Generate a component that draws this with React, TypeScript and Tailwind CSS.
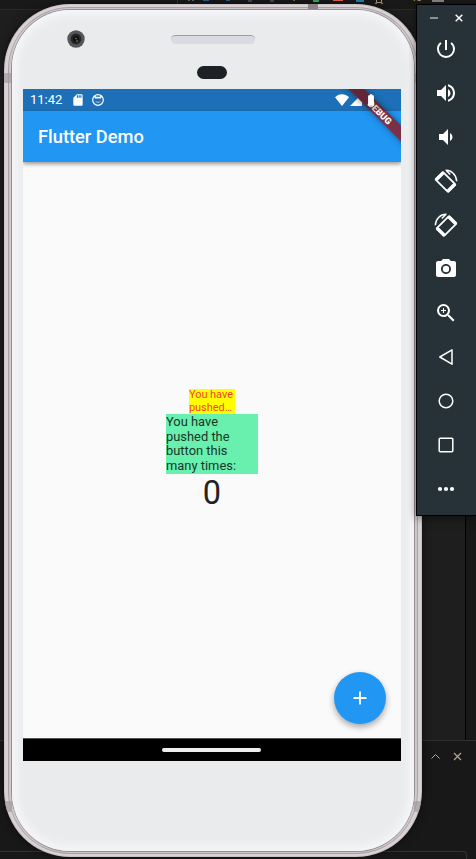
import React from "react";
import { MdPowerSettingsNew, MdVolumeUp, MdVolumeDown, MdPhotoCamera, MdZoomIn, MdSdCard, MdBatteryFull } from "react-icons/md";

function RotateIcon({ flipped = false }: { flipped?: boolean }) {
  return (
    <svg viewBox="0 0 24 24" className={flipped ? "size-6 -scale-x-100" : "size-6"} fill="none" stroke="white">
      <g transform="rotate(-45 11.5 13)">
        <rect x="6.2" y="4" width="10.6" height="18" rx="1" strokeWidth="1.8" />
        <path d="M6.2 5h10.6M6.2 21h10.6" strokeWidth="3" />
      </g>
      <path d="M11.5 1.3C17.6 1 22.2 5.8 22.7 12.2M12.2 1.5l4 4" strokeWidth="1.5" />
    </svg>
  );
}

function Outline({ children }: { children: React.ReactNode }) {
  return (
    <svg viewBox="0 0 24 24" className="size-6" fill="none" stroke="white" strokeWidth="1.5" strokeLinejoin="round">
      {children}
    </svg>
  );
}

const tools: React.ReactNode[] = [
  <MdPowerSettingsNew size={24} />,
  <MdVolumeUp size={24} />,
  <MdVolumeDown size={24} />,
  <RotateIcon />,
  <RotateIcon flipped />,
  <MdPhotoCamera size={24} />,
  <MdZoomIn size={24} />,
  <Outline><path d="M18 4.8v14.4L5.8 12Z" /></Outline>,
  <Outline><circle cx="12" cy="12" r="6.8" /></Outline>,
  <Outline><rect x="5.2" y="5.2" width="13.6" height="13.6" rx="1" /></Outline>,
  <svg viewBox="0 0 24 24" className="size-6" fill="white"><circle cx="6" cy="12" r="2.1" /><circle cx="12" cy="12" r="2.1" /><circle cx="18" cy="12" r="2.1" /></svg>,
];

function Toolbar() {
  return (
    <aside className="absolute left-[416px] top-1 flex h-[512px] w-[61px] flex-col border border-black bg-[#273238] text-white shadow-[0_2px_8px_rgba(0,0,0,0.5)]">
      <div className="flex h-[22px] items-end gap-[17px] pl-[13px]">
        <svg viewBox="0 0 8 8" className="mb-[5px] size-2" stroke="#a5adb0" strokeWidth="1.6"><path d="M0 4h8" /></svg>
        <svg viewBox="0 0 8 8" className="mb-[5px] size-2" stroke="white" strokeWidth="1.5"><path d="m.7.7 6.6 6.6M7.3.7.7 7.3" /></svg>
      </div>
      {tools.map((icon, i) => (
        <div key={i} className="flex h-11 shrink-0 items-center justify-center pr-[2px]">{icon}</div>
      ))}
    </aside>
  );
}

const tabMarks = [
  "h-px w-1.5 bg-[#35628a]",
  "h-px w-1 bg-[#35628a]",
  "h-0.5 w-1 bg-[#35506a]",
  "h-0.5 w-1 bg-[#35506a]",
  "h-px w-0.5 bg-[#80662e]",
  "h-0.5 w-1.5 bg-[#35b558]",
  "h-px w-2.5 bg-[#ef624f]",
  "h-0.5 w-2 bg-[#2384b8]",
];

function Editor() {
  return (
    <div className="flex h-full flex-col bg-[#181818]">
      <div className="flex h-[10px] items-start border-b border-[#292929] bg-[#191919] pl-[177px]">
        <span className="flex h-[5px] w-[18px] gap-0.5 border-l border-[#333] pl-2.5">
          <i className="h-px w-0.5 bg-[#5d6972]" />
          <i className="h-px w-0.5 bg-[#5d6972]" />
        </span>
        {tabMarks.map((mark, i) => (
          <span key={i} className="flex h-1 w-[22px] shrink-0 justify-center"><i className={mark} /></span>
        ))}
        <svg viewBox="0 0 8 5" className="ml-1 h-[5px] w-2 shrink-0" fill="none" stroke="#a3957a"><path d="M1.5 0v2.5h5V0M0 3.3h2M6 3.3h2" /></svg>
        <span className="-mt-[9px] ml-[27px] font-['Liberation_Sans'] text-[11px] leading-[13px] text-[#b6a081]">40</span>
        <span className="ml-2.5 h-0.5 w-3 bg-[#858585]" />
      </div>
      <div className="h-[731px] w-[466px] border-r border-black bg-[#1e1e1e]" />
      <div className="flex h-[111px] items-start justify-end gap-[13px] border-t border-[#303030] pr-[14px] pt-[11px]">
        <svg viewBox="0 0 9 9" className="size-[9px]" fill="none" stroke="#aaa"><path d="m.5 6.5 4-4 4 4" /></svg>
        <svg viewBox="0 0 9 9" className="size-[9px]" fill="none" stroke="#b4a591" strokeWidth="1.2"><path d="m1 1 7 7M8 1 1 8" /></svg>
      </div>
      <div className="h-2 w-[467px] rounded-tr border-r border-t border-[#333]" />
    </div>
  );
}

function StatusBar() {
  return (
    <div className="flex h-[22px] shrink-0 items-center bg-[#1d70b7] pl-[7px] pr-[25px] text-white">
      <span className="w-[33px] text-[13px] leading-[22px]">11:42</span>
      <MdSdCard size={14} className="ml-2 shrink-0" />
      <svg viewBox="0 0 12 12" className="ml-[7px] size-3 shrink-0">
        <circle cx="6" cy="6" r="5.3" fill="none" stroke="white" strokeWidth="1.2" />
        <path d="m2 1.8 1.8 2M10 1.8l-1.8 2" stroke="white" strokeWidth="1.5" />
        <path d="M3 2.8h6v1.7H3Z" fill="white" />
        <path d="M3 7.6h6a3.4 2.8 0 0 1-6 0Z" fill="white" fillOpacity=".45" />
      </svg>
      <div className="ml-auto flex items-center gap-px pr-[14px]">
        <svg viewBox="0 0 14 12" className="h-3 w-[14px] shrink-0" fill="white"><path d="M0 3.2C4-.7 10-.7 14 3.2L7 12Z" /></svg>
        <svg viewBox="0 0 12 12" className="size-3 shrink-0" fill="white"><path d="M12 0v12H0Z" /></svg>
      </div>
    </div>
  );
}

function Screen() {
  return (
    <div className="relative ml-[11px] flex h-[672px] w-[378px] flex-col overflow-hidden bg-[#fafafa] font-[Roboto,sans-serif]">
      <StatusBar />
      <header className="z-10 flex h-[51px] shrink-0 items-center bg-[#2196f3] pl-[15px] text-[18.3px] font-medium text-white shadow-[0_2px_4px_rgba(0,0,0,0.4)]">
        Flutter Demo
      </header>
      <main className="flex min-h-0 flex-1 flex-col items-center pt-[227px]">
        <p className="w-[46px] whitespace-nowrap bg-[#ffff00] text-[10.9px] leading-[12.6px] text-[#f44336]">You have<br />pushed…</p>
        <p className="w-[92px] whitespace-nowrap bg-[#69f0ae] pt-px text-[12.9px] leading-[14.6px] text-[#17362a]">You have<br />pushed the<br />button this<br />many times:</p>
        <p className="text-[32.5px] leading-[38px] text-[#222]">0</p>
        <button className="mb-[14px] mr-[15px] mt-auto flex size-[52px] shrink-0 items-center justify-center self-end rounded-full bg-[#2196f3] shadow-[0_3px_6px_rgba(0,0,0,0.35)]">
          <svg viewBox="0 0 14 14" className="size-[14px]" stroke="white" strokeWidth="1.8"><path d="M7 .5v13M.5 7h13" /></svg>
        </button>
      </main>
      <div className="flex h-[23px] shrink-0 items-center justify-center border-t border-[#555] bg-black pr-px">
        <div className="h-1 w-[99px] rounded-full bg-[#eee]" />
      </div>
      <div className="absolute -right-[42px] top-[19px] z-20 flex h-[11px] w-[124px] rotate-45 items-center justify-center bg-[#7a3045] pr-[3px] text-[9.2px] font-black text-white shadow-[0_0_6px_rgba(0,0,0,0.45)]">DEBUG</div>
      <div className="absolute right-0 top-0 z-20 h-[22px] w-[58px] bg-black/20 [clip-path:polygon(6px_0,21px_0,43px_22px,28px_22px)]" />
      <MdBatteryFull size={14} className="absolute right-[23px] top-1 z-20 text-white" />
    </div>
  );
}

function Phone() {
  return (
    <div className="absolute left-1 top-1 h-[853px] w-[418px] overflow-hidden rounded-[66px] bg-[#c9c2c5] p-px shadow-[0_0_8px_rgba(0,0,0,0.5)]">
      <div className="h-full rounded-[65px] border-x-[3px] border-y-2 border-[#d8d2d4] bg-[#a9a0a4] p-px">
        <div className="h-full rounded-[61px] border-x-2 border-y border-[#cfc8cb] bg-[#958e93] p-px">
          <div className="flex h-full flex-col rounded-[58px] bg-[#eaebed] shadow-[inset_0_0_8px_5px_#f5f6f9]">
            <div className="flex h-[79px] w-full shrink-0 flex-col">
              <div className="flex pl-[55px] pt-5">
                <svg viewBox="0 0 18 18" className="size-[18px]"><circle cx="9" cy="9" r="8.7" fill="#55565a" /><circle cx="9" cy="9" r="5.4" fill="#232529" /><circle cx="9" cy="9" r="3" fill="#09111a" /><path d="m8 8 2 1M9 11h2" stroke="#8b8b36" /></svg>
                <div className="ml-[86px] mt-[5px] h-[9px] w-[84px] rounded-full border-t border-[#949da9] bg-[#d9dbe0]" />
              </div>
              <div className="ml-[185px] mt-[18px] h-[13px] w-[30px] rounded-full bg-[#1d2125]" />
            </div>
            <Screen />
          </div>
        </div>
      </div>
      <span className="absolute left-0 top-[69px] h-[10px] w-[7px] bg-[#a29a9e]/70" />
      <span className="absolute right-0 top-[69px] h-[10px] w-[7px] bg-[#a29a9e]/70" />
      <span className="absolute left-[304px] top-0 h-[5px] w-[10px] bg-[#8c8388]" />
      <span className="absolute bottom-[45px] left-0 h-[11px] w-[8px] bg-[#a29a9e]/70" />
      <span className="absolute bottom-[45px] right-0 h-[11px] w-[8px] bg-[#a29a9e]/70" />
    </div>
  );
}

export default function App() {
  return (
    <div className="relative h-[859px] w-[476px] overflow-hidden">
      <Editor />
      <Phone />
      <Toolbar />
    </div>
  );
}
